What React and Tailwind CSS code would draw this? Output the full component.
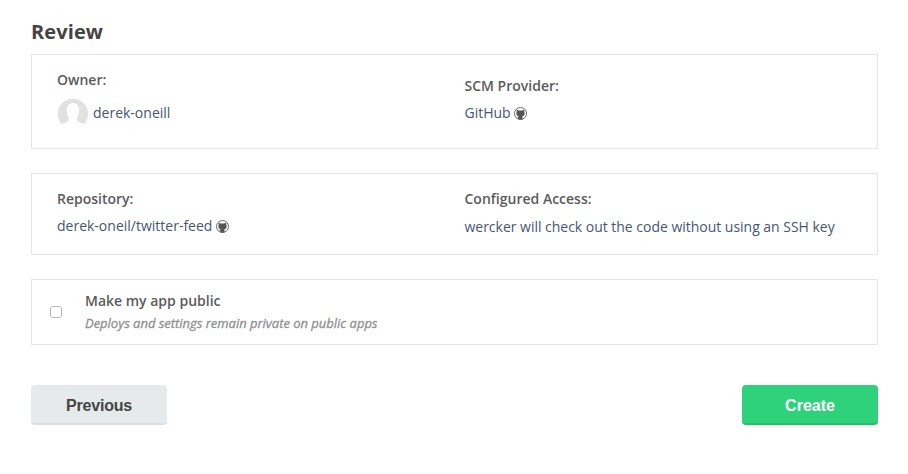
function GithubMark() {
  return (
    <svg width="13" height="13" viewBox="0 0 26 26" className="shrink-0" aria-hidden="true">
      <circle cx="13" cy="13" r="12" fill="none" stroke="#606060" strokeWidth="1.9" />
      <path
        fill="#555"
        d="M5.400 5.300l4.800 1.500h5.600l4.800-1.500v4.500c.7 1.200.9 2.600.6 4.200c-.5 2.800-2.200 4.200-4.200 4.700V24.800h-8V22.500L5.500 19.500l3.500.3V18.700c-2-.5-3.700-1.900-4.200-4.700c-.3-1.600-.1-3 .6-4.200z"
      />
    </svg>
  );
}

function Avatar() {
  return (
    <svg width="32" height="26" viewBox="0 0 32 26" className="-mt-px shrink-0" aria-hidden="true">
      <path
        fill="#e1e1e1"
        d="M4.200 25.800C2 23 .8 19.500.8 15.800C.8 7.300 7.600.8 15.900.8S31 7.300 31 15.800c0 3.700-1.200 7.200-3.400 10c-1.900-.2-4.600-.9-6.400-2.300c-1.400-1.100-1.600-3-.7-4.500c1-1.600 1.600-3.800 1.600-6.500c0-4.700-2.300-7.300-6.200-7.300s-6.200 2.600-6.200 7.300c0 2.700.6 4.900 1.600 6.500c.9 1.500.7 3.400-.7 4.500c-1.800 1.400-4.500 2.100-6.400 2.300z"
      />
    </svg>
  );
}

function Label({ children }) {
  return <div className="text-[14px] leading-5 font-semibold text-[#5b5b5b]">{children}</div>;
}

function Value({ children }) {
  return <div className="flex items-center text-[14px] leading-5 text-[#465672]">{children}</div>;
}

export default function App() {
  return (
    <main className="h-[474px] w-[908px] bg-white pt-[18px] pl-[31px] font-['Open_Sans',sans-serif]">
      <div className="w-[847px]">
        <h1 className="h-9 text-[20px] leading-7 font-bold tracking-[0.1px] text-[#444]">Review</h1>

        <section className="flex h-[95px] border border-[#e4e6e8] pl-[25px]">
          <div className="w-[407.500px] pt-[15px]">
            <Label>Owner:</Label>
            <div className="flex pt-[9px]">
              <Avatar />
              <div className="pt-1 pl-1">
                <Value>derek-oneill</Value>
              </div>
            </div>
          </div>
          <div className="pt-[21px]">
            <Label>SCM Provider:</Label>
            <div className="pt-[7px]">
              <Value>
                <span className="mr-[3px]">GitHub</span>
                <GithubMark />
              </Value>
            </div>
          </div>
        </section>

        <section className="mt-6 flex h-[82px] border border-[#e4e6e8] pl-[25px]">
          <div className="w-[407.500px] pt-[15px]">
            <Label>Repository:</Label>
            <div className="pt-[7px]">
              <Value>
                <span className="mr-1">derek-oneil/twitter-feed</span>
                <GithubMark />
              </Value>
            </div>
          </div>
          <div className="pt-[15px]">
            <Label>Configured Access:</Label>
            <div className="pt-2 tracking-[-0.02px]">
              <Value>wercker will check out the code without using an SSH key</Value>
            </div>
          </div>
        </section>

        <section className="mt-6 flex h-[66px] border border-[#e4e6e8] pl-[18px]">
          <input
            type="checkbox"
            aria-label="Make my app public"
            className="mt-[26px] mr-[23px] size-3 appearance-none rounded-[2.500px] border border-[#b9b9b9] bg-white"
          />
          <div className="pt-[11px]">
            <Label>Make my app public</Label>
            <p className="pt-[2px] text-[13px] leading-5 tracking-[-0.02px] text-[#8f8f8f] italic [-webkit-text-stroke:0.3px_#8f8f8f]">
              Deploys and settings remain private on public apps
            </p>
          </div>
        </section>

        <div className="mt-10 flex justify-between font-['Liberation_Sans',Arial,sans-serif] text-[16px] font-bold">
          <button className="h-10 w-[136px] rounded-[4px] border-b-2 border-[#d8dfde] bg-[#e6eaeb] pt-[3px] tracking-[-0.2px] text-[#444]">
            Previous
          </button>
          <button className="h-10 w-[136px] rounded-[4px] border-b-2 border-[#28be6c] bg-[#2dd27b] pt-[3px] text-white">
            Create
          </button>
        </div>
      </div>
    </main>
  );
}
